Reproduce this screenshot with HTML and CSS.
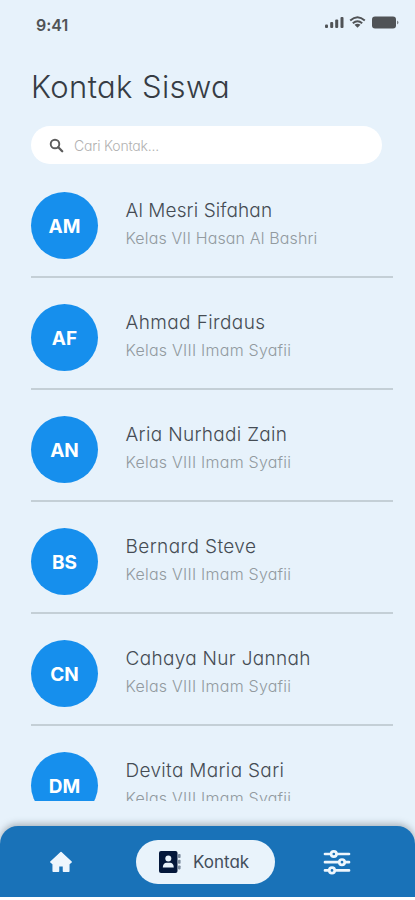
FILE: index.html
```html
<!DOCTYPE html>
<html lang="id">
<head>
<meta charset="utf-8">
<title>Kontak Siswa</title>
<link rel="stylesheet" href="styles.css">
</head>
<body>
<div class="app">
  <header class="status">
    <span class="time">9:41</span>
    <svg class="status-icons" width="76" height="16" viewBox="0 0 76 16" fill="#505356">
      <rect x="1" y="9.5" width="3" height="3.5" rx="1"/><rect x="6.2" y="7" width="3" height="6" rx="1"/><rect x="11.2" y="4.5" width="3" height="8.5" rx="1"/><rect x="16.5" y="2" width="3" height="11" rx="1"/>
      <g fill="none" stroke="#505356" stroke-width="1.9"><path d="M26.2 5.5Q33.5-1 40.8 5.5"/><path d="M28.8 8.3Q33.5 4 38.2 8.3"/></g>
      <path d="M30.5 9.8Q33.5 7.8 36.500 9.800L33.500 12.800Z"/>
      <rect x="48" y="1.500" width="24" height="12" rx="3"/><path d="M73.300 5.500Q75.500 7.500 73.300 9.500Z"/>
    </svg>
  </header>
  <h1 class="title">Kontak Siswa</h1>
  <div class="search">
    <svg width="15" height="15" viewBox="0 0 15 15" fill="none" stroke="#5c5c5c"><circle cx="6" cy="6" r="4.300" stroke-width="1.900"/><path d="M9.300 9.300L13.200 13.200" stroke-width="2.300" stroke-linecap="round"/></svg>
    <span class="placeholder">Cari Kontak...</span>
  </div>
  <main class="list">
    <article class="row"><div class="avatar">AM</div><div class="info"><h2 class="name n1">Al Mesri Sifahan</h2><p class="kelas k1">Kelas VII Hasan Al Bashri</p></div></article>
    <article class="row"><div class="avatar">AF</div><div class="info"><h2 class="name n2">Ahmad Firdaus</h2><p class="kelas">Kelas VIII Imam Syafii</p></div></article>
    <article class="row"><div class="avatar">AN</div><div class="info"><h2 class="name n3">Aria Nurhadi Zain</h2><p class="kelas">Kelas VIII Imam Syafii</p></div></article>
    <article class="row"><div class="avatar">BS</div><div class="info"><h2 class="name n2">Bernard Steve</h2><p class="kelas">Kelas VIII Imam Syafii</p></div></article>
    <article class="row"><div class="avatar">CN</div><div class="info"><h2 class="name n3">Cahaya Nur Jannah</h2><p class="kelas">Kelas VIII Imam Syafii</p></div></article>
    <article class="row"><div class="avatar">DM</div><div class="info"><h2 class="name n3">Devita Maria Sari</h2><p class="kelas">Kelas VIII Imam Syafii</p></div></article>
  </main>
  <nav class="nav">
    <a class="tab home"><svg width="24" height="22" viewBox="0 0 24 22" fill="#eef6fd" stroke="#eef6fd" stroke-width="1.500" stroke-linejoin="round"><path d="M12 1.500L22.200 11L20.400 12.500L19.800 12V20.200H14.500V14.800H9.500V20.200H4.200V12L3.600 12.500L1.800 11Z"/></svg></a>
    <a class="tab active">
      <svg width="24" height="24" viewBox="0 0 24 24"><rect x="1" y="1" width="18.500" height="22" rx="2" fill="#04173a"/><circle cx="10.300" cy="8.500" r="3" fill="#e9f3fb"/><path d="M4.800 17.500C4.800 14.500 6.500 12.800 8.500 12.800H12.100C14.100 12.800 15.800 14.500 15.800 17.500Z" fill="#e9f3fb"/><g fill="#7d8c9e"><rect x="20" y="4" width="2.600" height="4" rx=".8"/><rect x="20" y="9.700" width="2.600" height="4" rx=".8"/><rect x="20" y="15.400" width="2.600" height="4" rx=".8"/></g></svg>
      <span>Kontak</span>
    </a>
    <a class="tab filters"><svg width="28" height="26" viewBox="0 0 28 26" fill="#1972b8" stroke="#eef6fd" stroke-width="2.700" stroke-linecap="round"><path d="M2 5H26M2 13.200H26M2 21.400H26"/><circle cx="10.800" cy="5" r="2.700"/><circle cx="19" cy="13.200" r="2.700"/><circle cx="9" cy="21.400" r="2.700"/></svg></a>
  </nav>
</div>
</body>
</html>
```

FILE: styles.css
```css
* { box-sizing: border-box; }
body { margin: 0; background: #fff; font-family: Inter, "Liberation Sans", sans-serif; font-feature-settings: "cv11", "calt" 0; }
h1, h2, p { margin: 0; white-space: nowrap; }
.app { height: 897px; display: flex; flex-direction: column; background: #e7f2fb; overflow: hidden; }
.status { height: 48px; flex: none; display: flex; justify-content: space-between; align-items: flex-start; padding: 15px 15px 0 36px; }
.time { font-size: 16px; line-height: 20px; font-weight: 600; color: #505356; }
.status-icons { display: block; }
.title { height: 78px; flex: none; padding-left: 31px; font-size: 31px; line-height: 78px; font-weight: 300; color: #363c44; letter-spacing: .4px; }
.search { height: 38px; flex: none; margin: 0 33px 0 31px; padding: 0 18px; border-radius: 19px; background: #fff; display: flex; align-items: center; gap: 10px; }
.placeholder { font-size: 14px; font-weight: 300; color: #b1b1b1; letter-spacing: -.2px; }
.list { height: 637px; flex: none; padding: 28px 22px 0 31px; overflow: hidden; }
.row { height: 112px; display: flex; align-items: flex-start; background: linear-gradient(#c4cfd6, #c4cfd6) 0 84px / 100% 2px no-repeat; }
.avatar { flex: none; width: 67px; height: 67px; border-radius: 50%; background: #168fed; color: #fff; font-size: 19px; line-height: 69px; font-weight: 700; text-align: center; }
.info { flex: 1; padding: 3px 0 0 27.500px; }
.name { font-size: 19px; line-height: 31px; font-weight: 300; color: #454c54; }
.n1 { letter-spacing: .1px; }
.n2 { letter-spacing: .4px; }
.n3 { letter-spacing: .32px; }
.kelas { font-size: 16px; line-height: 25px; font-weight: 300; color: #929a9f; letter-spacing: .24px; }
.k1 { letter-spacing: .14px; }
.nav { height: 71px; flex: none; margin-top: 25px; border-radius: 18px 18px 0 0; background: #1972b8; box-shadow: 0 -2px 7px rgba(70, 80, 90, .4); display: flex; align-items: center; }
.tab { display: flex; align-items: center; }
.home { margin-left: 49px; }
.active { width: 139px; height: 44px; margin-left: 63px; padding-left: 22px; border-radius: 22px; background: #e9f3fb; gap: 11px; font-size: 17px; color: #434e5b; }
.filters { margin-left: 48px; }
```
